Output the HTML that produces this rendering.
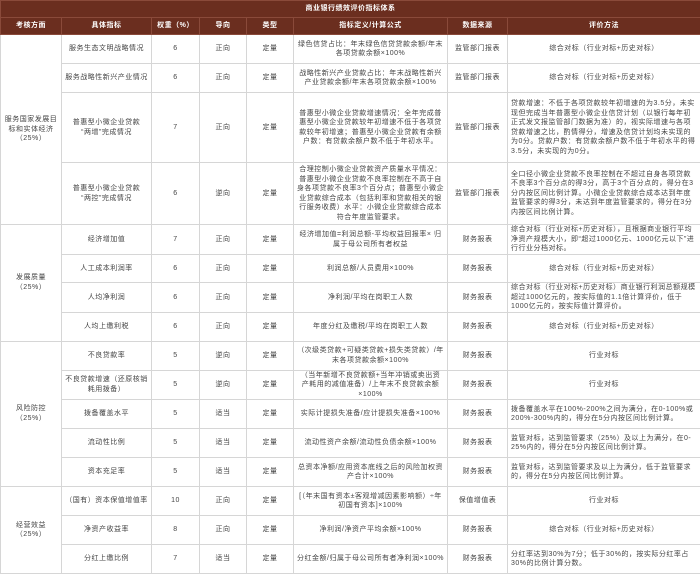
<!DOCTYPE html>
<html><head><meta charset="utf-8"><style>
html,body{margin:0;padding:0;background:#fff;}
body{width:700px;height:573px;overflow:hidden;font-family:"Liberation Sans","Noto Sans CJK SC",sans-serif;}
table{border-collapse:collapse;table-layout:fixed;width:700px;position:absolute;left:0;top:0;}
td{border:1px solid #d6d6d6;font-size:7px;line-height:9.5px;color:#444;text-align:center;vertical-align:middle;padding:0 3px;letter-spacing:0.5px;overflow:hidden;}
tr.t td{background:#6b2e1f;color:#fff;font-weight:bold;border-color:#8a4a3a;}
td.l{text-align:left;}
</style></head><body>
<table>
<colgroup><col style="width:61px"><col style="width:90px"><col style="width:48px"><col style="width:47px"><col style="width:47px"><col style="width:154px"><col style="width:60px"><col style="width:193px"></colgroup>
<tr class="t" style="height:17px"><td colspan="8">商业银行绩效评价指标体系</td></tr>
<tr class="t" style="height:17px"><td>考核方面</td><td>具体指标</td><td>权重（%）</td><td>导向</td><td>类型</td><td>指标定义/计算公式</td><td>数据来源</td><td>评价方法</td></tr>
<tr style="height:29px"><td rowspan="4">服务国家发展目<br>标和实体经济<br>（25%）</td><td>服务生态文明战略情况</td><td>6</td><td>正向</td><td>定量</td><td>绿色信贷占比：年末绿色信贷贷款余额/年末各项贷款余额×100%</td><td>监管部门报表</td><td>综合对标（行业对标+历史对标）</td></tr>
<tr style="height:29px"><td>服务战略性新兴产业情况</td><td>6</td><td>正向</td><td>定量</td><td>战略性新兴产业贷款占比：年末战略性新兴产业贷款余额/年末各项贷款余额×100%</td><td>监管部门报表</td><td>综合对标（行业对标+历史对标）</td></tr>
<tr style="height:70px"><td>普惠型小微企业贷款<br>“两增”完成情况</td><td>7</td><td>正向</td><td>定量</td><td>普惠型小微企业贷款增速情况：全年完成普惠型小微企业贷款较年初增速不低于各项贷款较年初增速；普惠型小微企业贷款有余额户数：有贷款余额户数不低于年初水平。</td><td>监管部门报表</td><td class="l">贷款增速：不低于各项贷款较年初增速的为3.5分，未实现但完成当年普惠型小微企业信贷计划（以银行每年初正式发文报监管部门数据为准）的，视实际增速与各项贷款增速之比，酌情得分，增速及信贷计划均未实现的为0分。贷款户数：有贷款余额户数不低于年初水平的得3.5分，未实现的为0分。</td></tr>
<tr style="height:62px"><td>普惠型小微企业贷款<br>“两控”完成情况</td><td>6</td><td>逆向</td><td>定量</td><td>合理控制小微企业贷款资产质量水平情况：普惠型小微企业贷款不良率控制在不高于自身各项贷款不良率3个百分点；普惠型小微企业贷款综合成本（包括利率和贷款相关的银行服务收费）水平：小微企业贷款综合成本符合年度监管要求。</td><td>监管部门报表</td><td class="l">全口径小微企业贷款不良率控制在不超过自身各项贷款不良率3个百分点的得3分，高于3个百分点的，得分在3分内按区间比例计算。小微企业贷款综合成本达到年度监管要求的得3分，未达到年度监管要求的，得分在3分内按区间比例计算。</td></tr>
<tr style="height:30px"><td rowspan="4">发展质量<br>（25%）</td><td>经济增加值</td><td>7</td><td>正向</td><td>定量</td><td>经济增加值=利润总额-平均权益回报率× 归属于母公司所有者权益</td><td>财务报表</td><td class="l">综合对标（行业对标+历史对标），且根据商业银行平均净资产规模大小，即“超过1000亿元、1000亿元以下”进行行业分档对标。</td></tr>
<tr style="height:28px"><td>人工成本利润率</td><td>6</td><td>正向</td><td>定量</td><td>利润总额/人员费用×100%</td><td>财务报表</td><td>综合对标（行业对标+历史对标）</td></tr>
<tr style="height:29px"><td>人均净利润</td><td>6</td><td>正向</td><td>定量</td><td>净利润/平均在岗职工人数</td><td>财务报表</td><td class="l">综合对标（行业对标+历史对标）商业银行利润总额规模超过1000亿元的，按实际值的1.1倍计算评价，低于1000亿元的，按实际值计算评价。</td></tr>
<tr style="height:29px"><td>人均上缴利税</td><td>6</td><td>正向</td><td>定量</td><td>年度分红及缴税/平均在岗职工人数</td><td>财务报表</td><td>综合对标（行业对标+历史对标）</td></tr>
<tr style="height:29px"><td rowspan="5">风险防控<br>（25%）</td><td>不良贷款率</td><td>5</td><td>逆向</td><td>定量</td><td>（次级类贷款+可疑类贷款+损失类贷款）/年末各项贷款余额×100%</td><td>财务报表</td><td>行业对标</td></tr>
<tr style="height:29px"><td>不良贷款增速（还原核销<br>耗用拨备）</td><td>5</td><td>逆向</td><td>定量</td><td>（当年新增不良贷款额+当年冲销或卖出资产耗用的减值准备）/上年末不良贷款余额×100%</td><td>财务报表</td><td>行业对标</td></tr>
<tr style="height:29px"><td>拨备覆盖水平</td><td>5</td><td>适当</td><td>定量</td><td>实际计提损失准备/应计提损失准备×100%</td><td>财务报表</td><td class="l">拨备覆盖水平在100%-200%之间为满分，在0-100%或200%-300%内的，得分在5分内按区间比例计算。</td></tr>
<tr style="height:29px"><td>流动性比例</td><td>5</td><td>适当</td><td>定量</td><td>流动性资产余额/流动性负债余额×100%</td><td>财务报表</td><td class="l">监管对标，达到监管要求（25%）及以上为满分，在0-25%内的，得分在5分内按区间比例计算。</td></tr>
<tr style="height:29px"><td>资本充足率</td><td>5</td><td>适当</td><td>定量</td><td>总资本净额/应用资本底线之后的风险加权资产合计×100%</td><td>财务报表</td><td class="l">监管对标，达到监管要求及以上为满分，低于监管要求的，得分在5分内按区间比例计算。</td></tr>
<tr style="height:29px"><td rowspan="3">经营效益<br>（25%）</td><td>（国有）资本保值增值率</td><td>10</td><td>正向</td><td>定量</td><td>[（年末国有资本±客观增减因素影响额）÷年初国有资本]×100%</td><td>保值增值表</td><td>行业对标</td></tr>
<tr style="height:29px"><td>净资产收益率</td><td>8</td><td>正向</td><td>定量</td><td>净利润/净资产平均余额×100%</td><td>财务报表</td><td>综合对标（行业对标+历史对标）</td></tr>
<tr style="height:29px"><td>分红上缴比例</td><td>7</td><td>适当</td><td>定量</td><td>分红金额/归属于母公司所有者净利润×100%</td><td>财务报表</td><td class="l">分红率达到30%为7分；低于30%的，按实际分红率占30%的比例计算分数。</td></tr>
</table>
</body></html>
